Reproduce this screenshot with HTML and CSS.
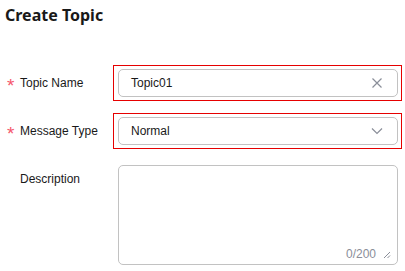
FILE: index.html
```html
<!DOCTYPE html>
<html lang="en">
<head>
    <meta charset="UTF-8">
    <meta name="viewport" content="width=device-width, initial-scale=1.0">
    <title>Create Topic</title>
    <link rel="stylesheet" href="styles.css">
</head>
<body>
    <div class="page">
        <h1 class="title">Create Topic</h1>

        <form class="topic-form">
            <div class="form-row">
                <label class="form-label"><span class="required">*</span>Topic Name</label>
                <div class="field-box highlight">
                    <div class="input">
                        <span class="input-value">Topic01</span>
                        <svg class="icon" width="12" height="12" viewBox="0 0 12 12">
                            <path d="M1.5 1.5 L10.5 10.5 M10.5 1.5 L1.5 10.5" stroke="#8a8e99" stroke-width="1.2" fill="none"/>
                        </svg>
                    </div>
                </div>
            </div>

            <div class="form-row">
                <label class="form-label"><span class="required">*</span>Message Type</label>
                <div class="field-box highlight">
                    <div class="input">
                        <span class="input-value">Normal</span>
                        <svg class="icon" width="12" height="12" viewBox="0 0 12 12">
                            <path d="M1 3.5 L6 8.5 L11 3.5" stroke="#8a8e99" stroke-width="1.2" fill="none"/>
                        </svg>
                    </div>
                </div>
            </div>

            <div class="form-row top">
                <label class="form-label desc"><span class="required"></span>Description</label>
                <div class="field-box">
                    <div class="textarea">
                        <div class="counter">
                            <span>0/200</span>
                            <svg width="9" height="9" viewBox="0 0 9 9">
                                <path d="M8 2 L2 8 M8 5.5 L5.5 8" stroke="#8a8e99" stroke-width="1" fill="none"/>
                            </svg>
                        </div>
                    </div>
                </div>
            </div>
        </form>
    </div>
</body>
</html>
```

FILE: styles.css
```css
body {
    margin: 0;
    background-color: #fff;
    color: #252b3a;
    font-family: "Liberation Sans", Arial, sans-serif;
    font-size: 12px;
}
.page {
    padding: 4px 0 0 5px;
}
.title {
    margin: 0;
    font-family: "Noto Sans", "Open Sans", sans-serif;
    font-size: 16px;
    font-weight: bold;
    color: #191919;
    line-height: 22px;
}
.topic-form {
    margin-top: 39px;
    display: flex;
    flex-direction: column;
    gap: 12px;
}
.form-row {
    display: grid;
    grid-template-columns: 108px 289px;
    grid-template-rows: 36px;
    align-items: center;
}
.form-row.top {
    grid-template-rows: auto;
    align-items: start;
}
.form-label {
    display: flex;
    align-items: center;
    padding-left: 2px;
    height: 16px;
    line-height: 16px;
    color: #191919;
}
.form-label.desc {
    margin-top: 10px;
}
.required {
    width: 13px;
    flex: none;
    color: #f5566b;
    font-size: 19px;
    line-height: 16px;
    height: 16px;
    margin-top: 6px;
}
.field-box {
    box-sizing: border-box;
    height: 36px;
    border: 1px solid transparent;
    padding: 3px 3px 3px 4px;
}
.form-row.top .field-box {
    height: auto;
}
.field-box.highlight {
    border: 1px solid #e60000;
}
.input {
    box-sizing: border-box;
    height: 28px;
    border: 1px solid #c2c2c2;
    border-radius: 5px;
    display: flex;
    align-items: center;
    justify-content: space-between;
    padding: 0 14px 0 12px;
}
.input-value {
    color: #191919;
}
.icon {
    display: block;
}
.textarea {
    box-sizing: border-box;
    height: 100px;
    border: 1px solid #c2c2c2;
    border-radius: 5px;
    display: flex;
    align-items: flex-end;
    justify-content: flex-end;
}
.counter {
    display: flex;
    align-items: center;
    gap: 6px;
    color: #8a8e99;
    padding: 0 6px 3px 0;
}
```
